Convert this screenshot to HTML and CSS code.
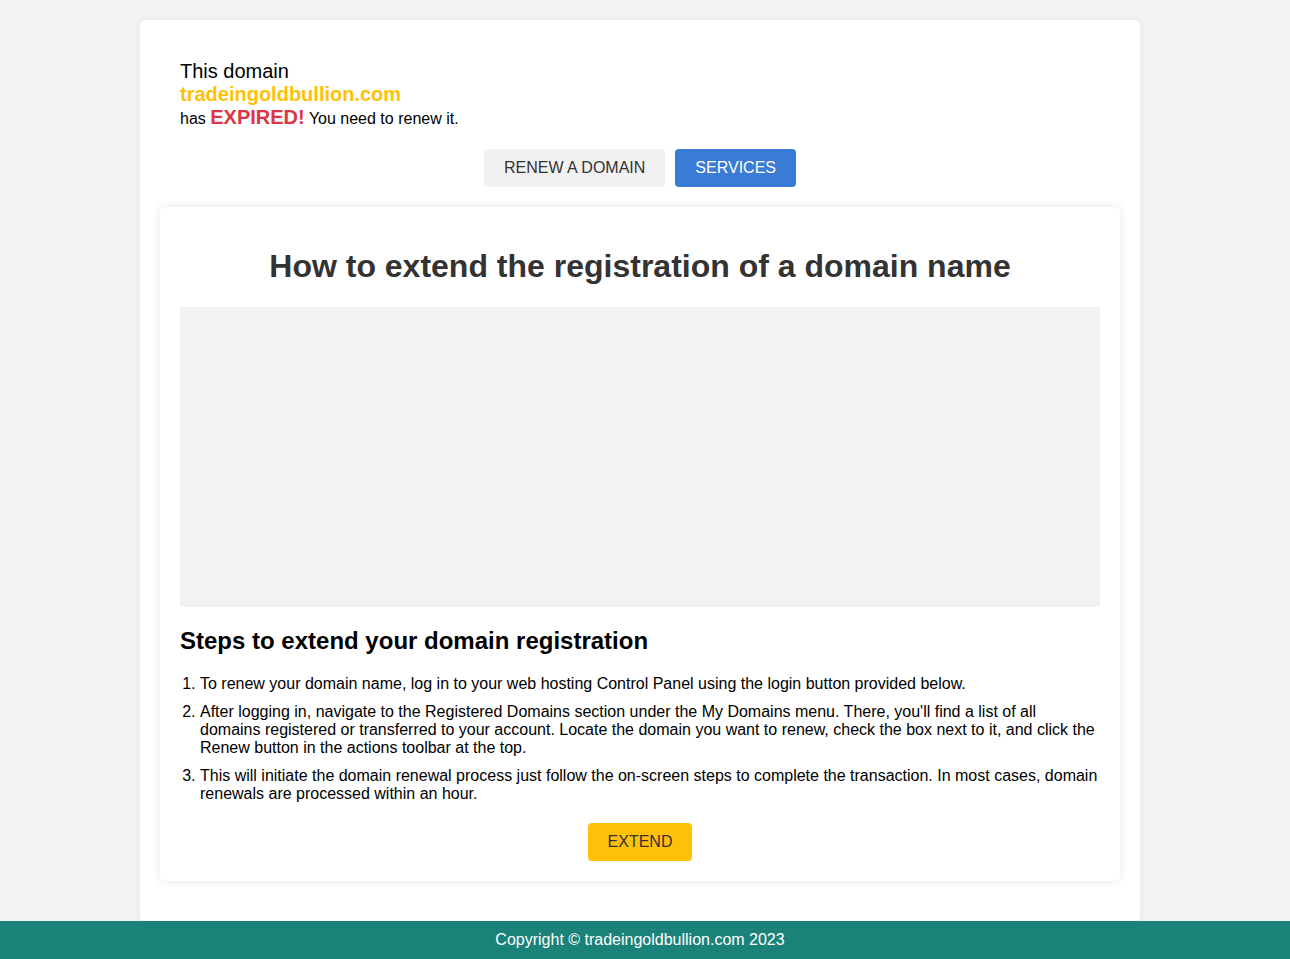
FILE: index.html
```html
<!DOCTYPE html>
<html lang="en">
<head>
<meta charset="utf-8">
<title>tradeingoldbullion.com has expired</title>
<link rel="stylesheet" href="styles.css">
</head>
<body>
<div class="container">
  <div class="header">
    <div class="intro">This domain</div>
    <div class="domain">tradeingoldbullion.com</div>
    <div class="status">has <span class="expired">EXPIRED!</span> You need to renew it.</div>
    <div class="nav">
      <a class="btn btn-light" href="#">RENEW A DOMAIN</a>
      <a class="btn btn-blue" href="#">SERVICES</a>
    </div>
  </div>
  <div class="card">
    <h1 class="title">How to extend the registration of a domain name</h1>
    <div class="media"></div>
    <h2 class="subtitle">Steps to extend your domain registration</h2>
    <ol class="steps">
      <li>To renew your domain name, log in to your web hosting Control Panel using the login button provided below.</li>
      <li>After logging in, navigate to the Registered Domains section under the My Domains menu. There, you'll find a list of all domains registered or transferred to your account. Locate the domain you want to renew, check the box next to it, and click the Renew button in the actions toolbar at the top.</li>
      <li>This will initiate the domain renewal process just follow the on-screen steps to complete the transaction. In most cases, domain renewals are processed within an hour.</li>
    </ol>
    <div class="action">
      <a class="btn btn-yellow" href="#">EXTEND</a>
    </div>
  </div>
</div>
<footer class="footer">Copyright © tradeingoldbullion.com 2023</footer>
</body>
</html>
```
FILE: styles.css
```css
html, body {
  margin: 0;
  padding: 0;
}
body {
  background: #f2f2f2;
  font-family: "Liberation Sans", Arial, sans-serif;
  color: #000;
}
.container {
  width: 960px;
  margin: 20px 0 0 140px;
  padding: 20px 20px 40px;
  background: #fff;
  border-radius: 5px;
  box-shadow: 0 0 10px rgba(0, 0, 0, 0.06);
}
.header {
  padding: 20px 20px 20px;
}
.intro {
  font-size: 20px;
  line-height: 23px;
}
.domain {
  font-size: 20px;
  line-height: 23px;
  font-weight: bold;
  color: #ffc107;
}
.status {
  font-size: 16px;
  line-height: 22px;
}
.expired {
  font-size: 20px;
  font-weight: bold;
  color: #dc3545;
}
.nav {
  display: flex;
  justify-content: center;
  gap: 10px;
  margin-top: 19px;
}
.btn {
  display: inline-block;
  padding: 10px 20px;
  font-size: 16px;
  line-height: 18px;
  text-decoration: none;
  border-radius: 4px;
}
.btn-light {
  background: #f1f1f1;
  color: #333;
}
.btn-blue {
  background: #3a7bd5;
  color: #fff;
}
.btn-yellow {
  background: #ffc107;
  color: #333;
}
.card {
  padding: 20px;
  background: #fff;
  border-radius: 5px;
  box-shadow: 0 0 10px rgba(0, 0, 0, 0.1);
}
.title {
  font-size: 32px;
  font-weight: bold;
  color: #333;
  text-align: center;
  margin: 21px 0 22px;
}
.media {
  height: 300px;
  background: #f2f2f2;
}
.subtitle {
  font-size: 24px;
  font-weight: bold;
  margin: 20px 0 20px;
}
.steps {
  margin: 0;
  padding-left: 20px;
  font-size: 16px;
  line-height: 18px;
}
.steps li {
  margin-bottom: 10px;
}
.steps li:last-child {
  margin-bottom: 0;
}
.action {
  display: flex;
  justify-content: center;
  margin-top: 20px;
}
.footer {
  background: #1a8278;
  color: #fff;
  text-align: center;
  font-size: 16px;
  line-height: 38px;
  height: 38px;
  padding-right: 10px;
}
```
